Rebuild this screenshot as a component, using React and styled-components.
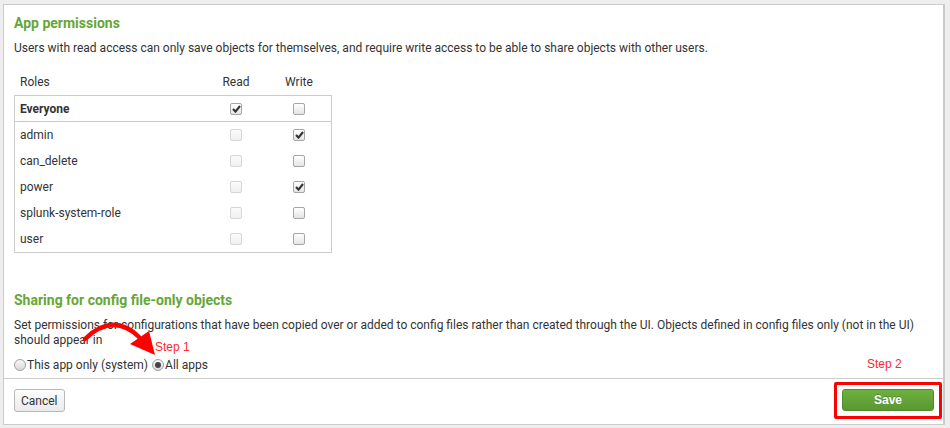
import React from "react";
import styled, { createGlobalStyle } from "styled-components";

const GlobalStyle = createGlobalStyle`
  html, body {
    margin: 0;
    padding: 0;
    background: #eeeeee;
  }
  body {
    font-family: Roboto, "Liberation Sans", Arial, sans-serif;
    font-size: 12px;
    color: #333;
  }
`;

const Page = styled.div`
  padding: 4px 5px 0 3px;
  width: 950px;
  height: 428px;
  box-sizing: border-box;
`;

const Panel = styled.div`
  position: relative;
  background: #fff;
  border: 1px solid #cccccc;
  border-right-width: 2px;
  height: 421px;
  box-sizing: border-box;
  display: flex;
  flex-direction: column;
`;

const Body = styled.div`
  padding: 9px 10px 3px 10px;
  flex: 1;
`;

const Heading = styled.h2`
  margin: ${(p) => (p.$top ? p.$top : 0)}px 0 0;
  font-size: 14px;
  line-height: 18px;
  font-weight: 700;
  color: #65a637;
`;

const Text = styled.p`
  margin: ${(p) => p.$top}px 0 0;
  line-height: 15px;
  color: #333;
`;

const Table = styled.div`
  width: 318px;
  margin-top: ${(p) => p.$top || 0}px;
  border: ${(p) => (p.$bare ? "1px solid transparent" : "1px solid #cccccc")};
  border-width: ${(p) => (p.$bare ? "0 1px" : "1px")};
  box-sizing: border-box;
`;

const Row = styled.div`
  display: grid;
  grid-template-columns: 190px 62px 64px;
  align-items: center;
  height: ${(p) => p.$h}px;
  border-bottom: ${(p) => (p.$divided ? "1px solid #cccccc" : "none")};
  box-sizing: content-box;
`;

const RoleName = styled.span`
  padding-left: 5px;
  font-weight: ${(p) => (p.$bold ? 700 : 400)};
  color: #333;
`;

const HeadCell = styled.span`
  padding-left: ${(p) => (p.$left ? "5px" : 0)};
  text-align: ${(p) => (p.$left ? "left" : "center")};
  color: #333;
`;

const Cell = styled.span`
  display: flex;
  justify-content: center;
  align-items: center;
`;

const Box = styled.span`
  width: 12px;
  height: 12px;
  box-sizing: border-box;
  border-radius: 2px;
  border: 1px solid ${(p) => (p.$disabled ? "#d6d6d6" : "#a6a6a6")};
  background: ${(p) =>
    p.$disabled
      ? "linear-gradient(#fafafa, #f0f0f0)"
      : "linear-gradient(#ffffff, #e4e4e4)"};
  display: flex;
  align-items: center;
  justify-content: center;
`;

const Check = ({ on, disabled }) => (
  <Cell>
    <Box $disabled={disabled}>
      {on && (
        <svg width="9" height="8" viewBox="0 0 9 8">
          <path d="M1 4 L3.5 6.6 L8 1" fill="none" stroke="#333" strokeWidth="2.1" />
        </svg>
      )}
    </Box>
  </Cell>
);

const RadioRow = styled.div`
  display: flex;
  align-items: center;
  margin-top: 9px;
  height: 16px;
  line-height: 16px;
`;

const RadioDot = styled.span`
  width: 12px;
  height: 12px;
  border-radius: 50%;
  box-sizing: border-box;
  border: 1px solid #a0a0a0;
  background: linear-gradient(#f7f7f7, #d9d9d9);
  display: flex;
  align-items: center;
  justify-content: center;
  margin-right: 1px;
  margin-left: ${(p) => (p.$gap ? "4px" : "0")};
  &::after {
    content: "";
    width: 6px;
    height: 6px;
    border-radius: 50%;
    background: ${(p) => (p.$on ? "#444" : "transparent")};
  }
`;

const RadioLabel = styled.span`
  color: #333;
  font-size: 12px;
`;

const Footer = styled.div`
  border-top: 1px solid #cccccc;
  padding: 10px 9px 0 10px;
  height: 46px;
  box-sizing: border-box;
  display: flex;
  justify-content: space-between;
  align-items: flex-start;
`;

const Button = styled.button`
  height: 23px;
  padding: 0 6px;
  font-family: Roboto, "Liberation Sans", Arial, sans-serif;
  font-size: 12px;
  border-radius: 3px;
  cursor: pointer;
  border: 1px solid #b8b8b8;
  background: linear-gradient(#fdfdfd, #eaeaea);
  color: #333;
`;

const Highlight = styled.span`
  position: relative;
  display: inline-flex;
  &::after {
    content: "";
    position: absolute;
    left: -8px;
    right: -8px;
    top: -7px;
    bottom: -8px;
    border: 3px solid #ff0000;
    border-radius: 2px;
    pointer-events: none;
  }
`;

const SaveButton = styled(Button)`
  width: 92px;
  height: 22px;
  font-family: "Liberation Sans", Arial, sans-serif;
  font-weight: 700;
  color: #fff;
  border-color: #4f8b2a;
  background: linear-gradient(#6db13f, #5a9731);
  text-shadow: 0 -1px 0 rgba(0, 0, 0, 0.2);
`;

const StepNote = styled.span`
  position: absolute;
  left: ${(p) => p.$x}px;
  top: ${(p) => p.$y}px;
  color: #ff2a2a;
  font-family: "Liberation Sans", Arial, sans-serif;
  font-size: 12px;
  line-height: 14px;
`;

const ArrowLayer = styled.svg`
  position: absolute;
  left: 0;
  top: 0;
  pointer-events: none;
`;

const roles = [
  { name: "admin", write: true },
  { name: "can_delete", write: false },
  { name: "power", write: true },
  { name: "splunk-system-role", write: false },
  { name: "user", write: false },
];

export default function App() {
  return (
    <>
      <GlobalStyle />
      <Page>
        <Panel>
          <Body>
            <Heading>App permissions</Heading>
            <Text $top={9}>
              Users with read access can only save objects for themselves, and require write access to be able to share objects with other users.
            </Text>
            <Table $bare $top={17}>
              <Row $h={18}>
                <HeadCell $left>Roles</HeadCell>
                <HeadCell>Read</HeadCell>
                <HeadCell>Write</HeadCell>
              </Row>
            </Table>
            <Table $top={4}>
              <Row $h={25} $divided>
                <RoleName $bold>Everyone</RoleName>
                <Check on />
                <Check />
              </Row>
              {roles.map((r) => (
                <Row $h={26} key={r.name}>
                  <RoleName>{r.name}</RoleName>
                  <Check disabled />
                  <Check on={r.write} />
                </Row>
              ))}
            </Table>
            <Heading $top={38}>Sharing for config file-only objects</Heading>
            <Text $top={9}>
              Set permissions for configurations that have been copied over or added to config files rather than created through the UI. Objects defined in config files only (not in the UI) should appear in
            </Text>
            <RadioRow>
              <RadioDot />
              <RadioLabel>This app only (system)</RadioLabel>
              <RadioDot $on $gap />
              <RadioLabel>All apps</RadioLabel>
            </RadioRow>
          </Body>
          <Footer>
            <Button>Cancel</Button>
            <Highlight>
              <SaveButton>Save</SaveButton>
            </Highlight>
          </Footer>
          <StepNote $x={151} $y={335}>Step 1</StepNote>
          <StepNote $x={863} $y={352}>Step 2</StepNote>
          <ArrowLayer width="200" height="380" viewBox="3 4 200 380">
            <path d="M84 338 Q112 311 138 336" fill="none" stroke="#ff0000" strokeWidth="4.5" strokeLinecap="round" />
            <polygon points="129,343 148,330 154,354" fill="#ff0000" />
          </ArrowLayer>
        </Panel>
      </Page>
    </>
  );
}
